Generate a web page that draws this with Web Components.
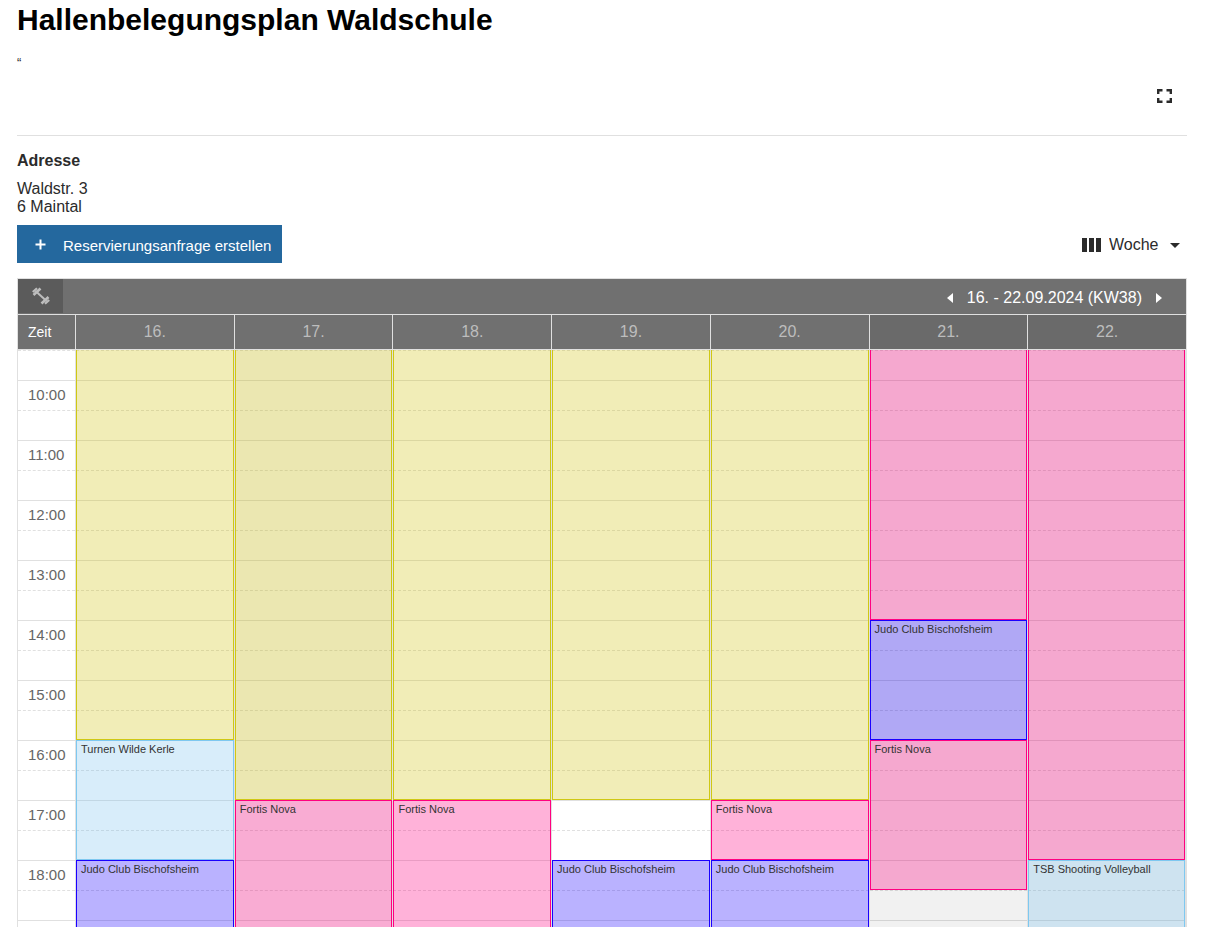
<!DOCTYPE html>
<html lang="de">
<head>
<meta charset="utf-8">
<title>Hallenbelegungsplan Waldschule</title>
<style>
  body {
    background: #fff;
    color: #2b2b2b;
    font: 16px/18px "Liberation Sans", Arial, sans-serif;
    margin: 0;
  }
</style>
</head>
<body>

<hall-page>
  <h1 slot="title">Hallenbelegungsplan Waldschule</h1>
  <hall-info slot="info" note="“">
    <h2 slot="heading">Adresse</h2>
    <address>Waldstr. 3<br>6 Maintal</address>
  </hall-info>
  <plan-actions slot="actions">Reservierungsanfrage erstellen</plan-actions>
  <week-plan slot="plan" range="16. - 22.09.2024 (KW38)"></week-plan>
</hall-page>

<script>
/*
  Small helper: clone a template string into an open shadow root
*/
function render(host, html) {
  const template = document.createElement('template')
  template.innerHTML = html
  host.attachShadow({ mode: 'open' }).appendChild(template.content.cloneNode(true))
}

/*
  Page frame
  -> the plan takes the remaining height of the window and is cut off there
*/
class HallPage extends HTMLElement {
  constructor() {
    super()
    render(this, `
      <style>
        :host {
          box-sizing: border-box;
          display: flex;
          flex-direction: column;
          height: 100vh;
          overflow: hidden;
          padding: 0 24px 0 17px;
        }

        ::slotted(h1) {
          color: #000;
          font-size: 30px;
          line-height: 40px;
          margin: 0 !important;
        }

        ::slotted(week-plan) {
          flex: 1;
          min-height: 0;
        }
      </style>
      <slot name="title"></slot>
      <slot name="info"></slot>
      <slot name="actions"></slot>
      <slot name="plan"></slot>
    `)
  }
}
customElements.define('hall-page', HallPage)

/*
  Note, fullscreen button and address block

  Props:
  note (string): short text above the divider
*/
class HallInfo extends HTMLElement {
  constructor() {
    super()
    render(this, `
      <style>
        :host { display: block; }

        .note {
          font-size: 13px;
          line-height: 14px;
          margin: 16px 0 0;
        }

        .tools {
          border-bottom: 1px solid #e0e0e0;
          display: flex;
          height: 65px;
          justify-content: flex-end;
        }

        button {
          align-self: flex-start;
          background: none;
          border: 0;
          color: inherit;
          height: 32px;
          margin: 10px 7px 0;
          padding: 0 8px;
        }

        svg { display: block; }

        ::slotted(h2) {
          font-size: 16px;
          line-height: 18px;
          margin: 16px 0 10px !important;
        }

        ::slotted(address) { font-style: normal; }
      </style>
      <p class="note"></p>
      <div class="tools">
        <button type="button" aria-label="Vollbild">
          <svg width="15" height="14" viewBox="0 0 15 14" fill="none" stroke="currentColor" stroke-width="2.400">
            <path d="M1.200 5V1.200H5.500M9.500 1.200H13.800V5M13.800 9V12.800H9.500M5.500 12.800H1.200V9"/>
          </svg>
        </button>
      </div>
      <slot name="heading"></slot>
      <slot></slot>
    `)
  }

  connectedCallback() {
    this.shadowRoot.querySelector('.note').textContent = this.getAttribute('note')
  }
}
customElements.define('hall-info', HallInfo)

/*
  Request button on the left, view switch on the right
*/
class PlanActions extends HTMLElement {
  constructor() {
    super()
    render(this, `
      <style>
        :host {
          align-items: center;
          display: flex;
          justify-content: space-between;
          margin: 9px 0 15px;
        }

        button {
          align-items: center;
          background: #24689e;
          border: 0;
          color: #fff;
          display: flex;
          font: 15px/18px "Liberation Sans", Arial, sans-serif;
          gap: 17px;
          height: 38px;
          padding: 4px 11px 0 18px;
        }

        button svg { margin-bottom: 4px; }

        label {
          align-items: center;
          display: flex;
          gap: 8px;
          padding: 2px 7px 0 0;
        }

        select {
          appearance: none;
          background: none;
          border: 0;
          color: inherit;
          font: inherit;
          padding: 0;
        }

        .caret { margin-left: 3px; }
      </style>
      <button type="button">
        <svg width="11" height="11" viewBox="0 0 11 11" fill="none" stroke="currentColor" stroke-width="2" aria-hidden="true">
          <path d="M5.500 .5V10.500M.5 5.500H10.500"/>
        </svg>
        <slot></slot>
      </button>
      <label>
        <svg width="19" height="14" viewBox="0 0 19 14" fill="currentColor" aria-hidden="true">
          <path d="M0 0h5v14H0zM7 0h5v14H7zM14 0h5v14h-5z"/>
        </svg>
        <select aria-label="Ansicht">
          <option>Woche</option>
        </select>
        <svg class="caret" width="10" height="5" viewBox="0 0 10 5" fill="currentColor" aria-hidden="true">
          <path d="M0 0h10L5 5z"/>
        </svg>
      </label>
    `)
  }
}
customElements.define('plan-actions', PlanActions)

/*
  One booking, fills the half hour rows it is given

  Props:
  kind (string): colour, "pink", "blue" or "sky", defaults to yellow
  continued (boolean): started before the first row, so it has no top edge
*/
class PlanEvent extends HTMLElement {
  constructor() {
    super()
    render(this, `
      <style>
        :host {
          --line: #cfc814;
          --fill: rgba(207, 196, 15, .3);

          background: var(--fill);
          border: 1px solid var(--line);
          color: #333;
          display: block;
          font-size: 11px;
          line-height: 14px;
          overflow: hidden;
          padding: 1px 4px;
          z-index: 1;
        }

        :host([kind="pink"]) { --line: #ff0080; --fill: rgba(255, 0, 128, .3); }
        :host([kind="blue"]) { --line: #1a00ff; --fill: rgba(26, 0, 255, .3); }
        :host([kind="sky"]) { --line: #7ec8f0; --fill: rgba(126, 196, 240, .3); }
        :host([continued]) { border-top: 0; }
      </style>
      <slot></slot>
    `)
  }
}
customElements.define('plan-event', PlanEvent)

/*
  Column of half hour rows

  Props:
  labels (boolean): print the full hours
  Events are set through the "events" property: [kind, from, to, title]
*/
const FIRST_HOUR = 9.5
const LAST_HOUR = 19
const ROWS = 20

class PlanColumn extends HTMLElement {
  constructor() {
    super()
    render(this, `
      <style>
        :host {
          display: grid;
          grid-auto-rows: 30px;
          grid-template-columns: 100%;
        }

        .slot {
          border-top: 1px solid rgba(0, 0, 0, .12);
          box-sizing: border-box;
          color: #666;
          font-size: 15px;
          grid-column: 1;
          line-height: 28px;
          padding-left: 10px;
        }

        .half { border-top-style: dashed; }
      </style>
    `)
    this.events = []
  }

  connectedCallback() {
    for (let i = 0; i < ROWS; i++) {
      const hour = FIRST_HOUR + i / 2
      const slot = document.createElement('div')
      slot.className = hour % 1 ? 'slot half' : 'slot'
      slot.style.gridRow = i + 1
      if (this.hasAttribute('labels') && hour % 1 === 0 && hour < LAST_HOUR) {
        slot.textContent = `${hour}:00`
      }
      this.shadowRoot.appendChild(slot)
    }

    this.events.forEach(([kind, from, to, title]) => {
      const item = document.createElement('plan-event')
      item.setAttribute('kind', kind)
      item.toggleAttribute('continued', from === FIRST_HOUR)
      item.style.gridColumn = 1
      item.style.gridRow = `${(from - FIRST_HOUR) * 2 + 1} / ${(to - FIRST_HOUR) * 2 + 1}`
      item.textContent = title
      this.shadowRoot.appendChild(item)
    })
  }
}
customElements.define('plan-column', PlanColumn)

const days = [
  { label: '16.', events: [
    ['yellow', 9.5, 16, ''],
    ['sky', 16, 18, 'Turnen Wilde Kerle'],
    ['blue', 18, 19.5, 'Judo Club Bischofsheim']
  ] },
  { label: '17.', shade: 'today', events: [
    ['yellow', 9.5, 17, ''],
    ['pink', 17, 19.5, 'Fortis Nova']
  ] },
  { label: '18.', events: [
    ['yellow', 9.5, 17, ''],
    ['pink', 17, 19.5, 'Fortis Nova']
  ] },
  { label: '19.', events: [
    ['yellow', 9.5, 17, ''],
    ['blue', 18, 19.5, 'Judo Club Bischofsheim']
  ] },
  { label: '20.', events: [
    ['yellow', 9.5, 17, ''],
    ['pink', 17, 18, 'Fortis Nova'],
    ['blue', 18, 19.5, 'Judo Club Bischofsheim']
  ] },
  { label: '21.', shade: 'weekend', events: [
    ['pink', 9.5, 14, ''],
    ['blue', 14, 16, 'Judo Club Bischofsheim'],
    ['pink', 16, 18.5, 'Fortis Nova']
  ] },
  { label: '22.', shade: 'weekend', events: [
    ['pink', 9.5, 18, ''],
    ['sky', 18, 19.5, 'TSB Shooting Volleyball']
  ] }
]

/*
  Week plan: toolbar and table with one column per day

  Props:
  range (string): text between the two arrows
*/
class WeekPlan extends HTMLElement {
  constructor() {
    super()
    render(this, `
      <style>
        :host {
          border: 1px solid #e0e0e0;
          border-bottom: 0;
          display: block;
          overflow: hidden;
        }

        .bar {
          align-items: center;
          background: #707070;
          color: #fff;
          display: flex;
          height: 35px;
          justify-content: space-between;
        }

        button {
          align-items: center;
          background: none;
          border: 0;
          color: inherit;
          display: flex;
          height: 34px;
          justify-content: center;
          padding: 0;
        }

        .facility {
          align-self: flex-start;
          background: #5b5b5b;
          color: #bdbdbd;
          width: 45px;
        }

        .nav {
          align-items: center;
          display: flex;
          gap: 7px;
          padding: 2px 17px 0 0;
        }

        .nav button { width: 20px; }

        table {
          border-collapse: separate;
          border-spacing: 0;
          table-layout: fixed;
          width: 100%;
        }

        th {
          background: #707070;
          border: solid #e0e0e0;
          border-width: 1px 0 1px 1px;
          color: #bdbdbd;
          font-weight: normal;
          height: 34px;
          padding: 0;
        }

        th:first-child {
          border-left: 0;
          box-sizing: border-box;
          color: #fff;
          font-size: 14px;
          padding-left: 10px;
          text-align: left;
          width: 57px;
        }

        td {
          border-left: 1px solid #e0e0e0;
          padding: 0;
          vertical-align: top;
        }

        td:first-child { border-left: 0; }
        td:last-child { border-right: 1px solid #e0e0e0; }
        td.today { background: #f7f7f7; }
        td.weekend { background: #f1f1f1; }
        th.weekend { background: #6a6a6a; }
      </style>
      <div class="bar">
        <button class="facility" type="button" aria-label="Halle">
          <svg width="18" height="18" viewBox="0 0 18 18" fill="none" stroke="currentColor" aria-hidden="true">
            <path stroke-width="2" d="M3.500 4L14.500 14"/>
            <path stroke-width="2.600" d="M1.500 8L8.500 1.500M9.500 16.500L16.500 10"/>
            <path stroke-width="2.200" d="M.8 5L5 1.200M13 16.800L17.200 13"/>
          </svg>
        </button>
        <div class="nav">
          <button type="button" aria-label="Vorherige Woche">
            <svg width="6" height="10" viewBox="0 0 6 10" fill="currentColor"><path d="M6 0v10L0 5z"/></svg>
          </button>
          <span class="range"></span>
          <button type="button" aria-label="Nächste Woche">
            <svg width="6" height="10" viewBox="0 0 6 10" fill="currentColor"><path d="M0 0v10l6-5z"/></svg>
          </button>
        </div>
      </div>
      <table>
        <thead><tr><th scope="col">Zeit</th></tr></thead>
        <tbody><tr><td><plan-column labels></plan-column></td></tr></tbody>
      </table>
    `)
  }

  connectedCallback() {
    const root = this.shadowRoot
    root.querySelector('.range').textContent = this.getAttribute('range')

    days.forEach(day => {
      const head = document.createElement('th')
      head.scope = 'col'
      head.className = day.shade || ''
      head.textContent = day.label
      root.querySelector('thead tr').appendChild(head)

      const cell = document.createElement('td')
      const column = document.createElement('plan-column')
      column.events = day.events
      cell.className = day.shade || ''
      cell.appendChild(column)
      root.querySelector('tbody tr').appendChild(cell)
    })
  }
}
customElements.define('week-plan', WeekPlan)
</script>
</body>
</html>
